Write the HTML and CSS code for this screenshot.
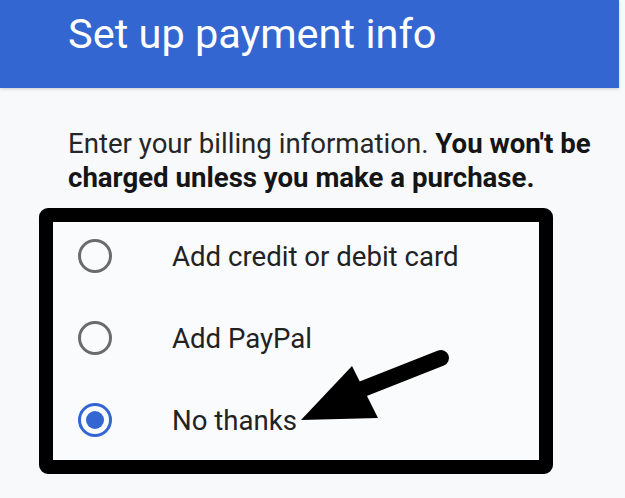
FILE: index.html
```html
<!DOCTYPE html>
<html lang="en">
<head>
<meta charset="utf-8">
<title>Set up payment info</title>
<link rel="stylesheet" href="styles.css">
</head>
<body>
<div class="screen">
  <header class="appbar">
    <h1 class="appbar-title">Set up payment info</h1>
  </header>

  <p class="intro">Enter your billing information. <strong>You won't be charged unless you make a purchase.</strong></p>

  <div class="options">
    <label class="option">
      <span class="radio"></span>
      <span class="option-label">Add credit or debit card</span>
    </label>
    <label class="option">
      <span class="radio"></span>
      <span class="option-label">Add PayPal</span>
    </label>
    <label class="option">
      <span class="radio radio-checked"></span>
      <span class="option-label">No thanks</span>
    </label>
  </div>

  <svg class="pointer" width="625" height="498" viewBox="0 0 625 498" aria-hidden="true">
    <line x1="441" y1="358" x2="360" y2="390" stroke="#000" stroke-width="16" stroke-linecap="round"/>
    <polygon points="301,420 352,366 378,418" fill="#000"/>
  </svg>
</div>
</body>
</html>
```

FILE: styles.css
```css
* {
  box-sizing: border-box;
}

html,
body {
  margin: 0;
  padding: 0;
  background: #f3f4f6;
}

.screen {
  position: relative;
  width: 625px;
  height: 498px;
  overflow: hidden;
  background: #f8f9fb;
  font-family: Roboto, "Noto Sans", "Liberation Sans", sans-serif;
  color: #222;
}

.appbar {
  width: 619px;
  height: 88px;
  background: #3366d1;
  padding: 10px 0 0 68px;
  box-shadow: 0 1px 3px rgba(0, 0, 0, 0.18);
}

.appbar-title {
  margin: 0;
  font-size: 41.5px;
  line-height: 48px;
  font-weight: 400;
  color: #fff;
}

.intro {
  margin: 39px 0 0 68px;
  width: 545px;
  font-size: 27.6px;
  line-height: 34px;
  color: #262626;
}

.intro strong {
  font-weight: 700;
  color: #151515;
}

.options {
  margin: 13px 0 0 39px;
  width: 514px;
  height: 266px;
  border: 14px solid #000;
  border-radius: 9px;
  padding: 17px 0 0 25px;
  display: flex;
  flex-direction: column;
  gap: 48px;
  background: #fafbfc;
}

.option {
  display: flex;
  align-items: center;
  gap: 60px;
  height: 34px;
}

.radio {
  flex: none;
  width: 34px;
  height: 34px;
  border: 3px solid #6b6b6b;
  border-radius: 50%;
  display: flex;
  align-items: center;
  justify-content: center;
}

.radio-checked {
  border-color: #3366d1;
}

.radio-checked::after {
  content: "";
  width: 18px;
  height: 18px;
  border-radius: 50%;
  background: #3366d1;
}

.option-label {
  font-size: 27.6px;
  line-height: 34px;
  padding-top: 2px;
  color: #222;
}

.pointer {
  position: absolute;
  top: 0;
  left: 0;
  pointer-events: none;
}
```
